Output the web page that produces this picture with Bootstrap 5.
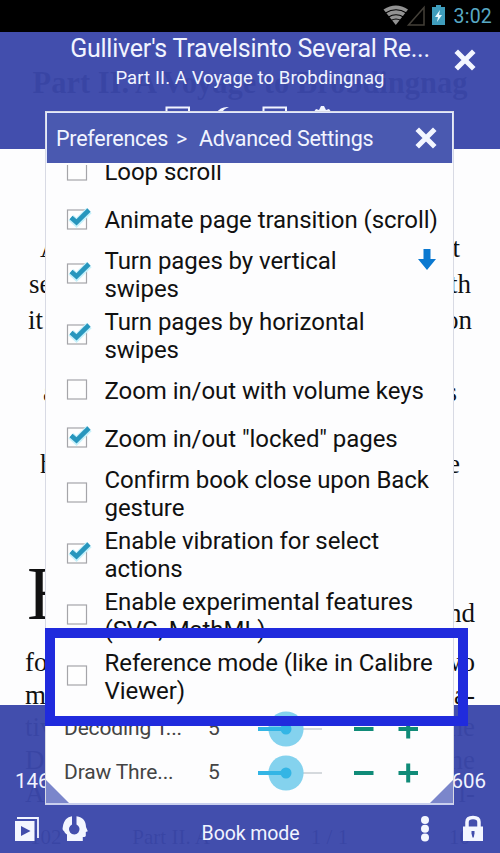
<!DOCTYPE html>
<html lang="en">
<head>
<meta charset="utf-8">
<meta name="viewport" content="width=device-width, initial-scale=1">
<title>Advanced Settings</title>
<link href="https://cdn.jsdelivr.net/npm/bootstrap@5.3.0/dist/css/bootstrap.min.css" rel="stylesheet">
<style>
body{font-family:Roboto,"Liberation Sans",sans-serif;background:#fff;color:#111}
.screen{width:500px;height:853px;background:#fdfdfe}
.layer{position:absolute;left:0;right:0}
.statusbar{height:32px;background:#000;z-index:2}
.clock{font-size:19.5px;letter-spacing:.2px;color:#58a9c4;line-height:33px}
.bar{background:rgba(59,72,170,.965);color:#f1f4ff}
.topbar{top:32px;height:117px}
.bottombar{bottom:0;height:148px}
.booktitle{font-size:25px;line-height:34px;letter-spacing:-.24px}
.chapter{font-size:18.5px;line-height:24px;letter-spacing:.09px}
.page{top:32px;bottom:0;font-family:"Liberation Serif",serif;color:#111;font-size:27px;padding:0 25px;overflow:hidden}
.page-title{font-size:30.5px;line-height:40px;padding-top:31px;height:198px}
.ln{line-height:36px;height:36px}
.ln-t{line-height:32.7px;height:32.7px}
.opening{height:151px;margin-bottom:13px}
.dropcap{font-size:76px;line-height:76px;height:78px;padding-left:2px}
.dialog-box{left:45px;width:409px;top:111px;height:694px;background:#fdfdfe;border:1px solid #d8dae4;border-bottom:2px solid #c9cfee;overflow:hidden}
.dialog-head{height:52px;background:#4a59b0;color:#f1f4ff;border:2px solid #e3e9ff;border-bottom:0;margin:-1px -1px 0;font-size:21.5px;letter-spacing:-.25px;padding:0 15px 0 9px;flex:none}
.crumbs{padding-top:2px}
.scroller{overflow:hidden;height:541.5px;flex:none;margin-top:2px}
.opts{margin-top:-18px}
.opt{height:61px;font-size:24px;line-height:28.2px;padding-left:20px;letter-spacing:-.07px}
.opt.single{height:48.4px}
.opt svg{width:26px;height:24px;flex:none;margin-right:12.5px;overflow:visible}
.opt span{white-space:nowrap;padding-top:2px}
.slide{height:44px;font-size:21px;letter-spacing:-.15px;color:#444;padding-left:18px}
.slide .lbl{width:144px}
.slide .val{width:49px}
.corner{bottom:0;z-index:1}
.highlight{left:45px;width:422.5px;top:628px;height:97.5px;border:10px solid #202bdd;z-index:5}
.arrow-down{right:16px;top:136px;position:absolute}
.mode{font-size:19.5px;letter-spacing:-.1px;padding:10px 8px 0 0}
.nums{font-size:20.5px;padding:0 14px 0 15px;top:64px;line-height:24px}
.tools{bottom:0;height:48px}
.ghost{top:792px;font-size:21px;padding:0 30px;line-height:26px}
.ghost .ch{margin-left:-30px}
.ic{display:block;flex:none}
</style>
<script src="https://cdn.jsdelivr.net/npm/bootstrap@5.3.0/dist/js/bootstrap.bundle.min.js"></script>
</head>
<body>
<svg width="0" height="0" class="position-absolute">
  <symbol id="off" viewBox="0 0 26 24"><rect x="1.500" y="2" width="19" height="19" fill="#fefefe" stroke="#a5a5a9" stroke-width="1.200"/></symbol>
  <symbol id="on" viewBox="0 0 26 24"><rect x="1.500" y="2" width="19" height="19" fill="#fefefe" stroke="#a5a5a9" stroke-width="1.200"/><path d="M5 9.800l5.500 5L23 2.500" fill="none" stroke="#c6f1fb" stroke-width="7.500"/><path d="M5 9.500l5.500 4.800L23 2" fill="none" stroke="#2796bd" stroke-width="4.600"/></symbol>
  <symbol id="x" viewBox="0 0 22 22"><path d="M4 4l14 14M18 4L4 18" stroke="#f3f6ff" stroke-width="5" stroke-linecap="square"/></symbol>
  <symbol id="seek" viewBox="0 0 66 36"><path d="M28 18h37" stroke="#c7ccd2" stroke-width="1.300"/><circle cx="29" cy="18" r="17.600" fill="#84d2ee"/><path d="M1 18h28" stroke="#33b5e5" stroke-width="4"/><circle cx="29" cy="18" r="5.500" fill="#33b5e5"/></symbol>
</svg>
<main class="screen position-relative overflow-hidden">
  <div class="layer statusbar top-0 d-flex align-items-center justify-content-end pe-2">
    <svg class="ic" width="64" height="32" viewBox="0 0 64 32">
      <path d="M1.500 9.500Q14 1.500 26 9.500L13.800 25Z" fill="#929292"/>
      <path d="M3.500 13q10.500-6.500 21 0M6.500 17q7.500-4.500 15 0M9 20.500q5-3 10 0" fill="none" stroke="#000" stroke-width="1.200"/>
      <path d="M26.500 25H42V7.500Z" fill="none" stroke="#444039" stroke-width="1.500"/>
      <path d="M50 7h4V5h5v2h4v18h-13z" fill="#3f9dbc"/><path d="M58 10l-5 7h3l-1 5 5-7h-3z" fill="#e9faff"/>
    </svg>
    <span class="clock ps-2">3:02</span>
  </div>
  <div class="layer page">
    <div class="page-title d-flex justify-content-center fw-bold text-nowrap">Part II. A Voyage to Brobdingnag</div>
    <div class="ln d-flex justify-content-between" style="padding:0 15px"><span>A</span><span>t</span></div>
    <div class="ln d-flex justify-content-between px-1"><span>se</span><span>th</span></div>
    <div class="ln d-flex justify-content-between" style="padding:0 3px"><span>it</span><span>on</span></div>
    <div class="ln"></div>
    <div class="ln d-flex justify-content-between" style="padding:0 18px"><span>a</span><span>s</span></div>
    <div class="ln"></div>
    <div class="ln d-flex justify-content-between" style="padding:0 15px"><span>h</span><span>e</span></div>
    <div class="opening d-flex justify-content-between align-items-end">
      <span class="dropcap">H</span><span>nd</span></div>
    <div>
      <div class="ln-t d-flex justify-content-between"><span>fo</span><span>wo</span></div>
      <div class="ln-t d-flex justify-content-between"><span>m</span><span>a-</span></div>
      <div class="ln-t d-flex justify-content-between"><span>tive</span><span>he</span></div>
      <div class="ln-t d-flex justify-content-between"><span>D</span><span>he</span></div>
      <div class="ln-t d-flex justify-content-between"><span>A</span><span>l-</span></div>
    </div>
    <div class="layer ghost d-flex justify-content-between"><span>102</span><span class="ch">Part II. A</span><span>1 / 1</span><span>10</span></div>
  </div>
  <header class="layer bar topbar">
    <div class="text-center text-nowrap booktitle">Gulliver's Travelsinto Several Re...</div>
    <div class="text-center text-nowrap chapter">Part II. A Voyage to Brobdingnag</div>
    <svg class="ic position-absolute end-0 top-0" style="margin:17px 24px 0 0" width="22" height="22"><use href="#x"/></svg>
    <svg class="ic ms-auto me-auto mt-3" width="170" height="12" viewBox="0 0 170 12"><path d="M1.500 12V1.500H24V12M98.500 12V1.500H121V12" fill="none" stroke="#f1f4ff" stroke-width="2"/><path d="M51 7Q56 0 64 1q-6 2-7 6zM148 7l3-4 3 1 2-4h3l2 4 3-1 3 4z" fill="#f1f4ff"/></svg>
  </header>
  <footer class="layer bar bottombar">
    <div class="layer nums d-flex justify-content-between"><span>146</span><span>606</span></div>
    <div class="layer tools d-flex align-items-center">
      <svg class="ic" style="margin-left:14px" width="26" height="28" viewBox="0 0 26 28"><path d="M1 6h19.500v20H1z" fill="#f3f6ff"/><path d="M3 3h21v20" fill="none" stroke="#f3f6ff" stroke-width="1.800"/><path d="M7 11v10l9.500-5z" fill="#414dac"/></svg>
      <svg class="ic" style="margin-left:21px" width="28" height="28" viewBox="0 0 28 28"><path d="M6 26v-6.500C4.500 18.500 3.500 17.500 3 16Q1 15 1.800 12C3 5 6 2 11 1.200V9.500a5.300 5.300 0 1 0 4.500 0V1.200C22 2 25 6 25 12l1.800 4.200-2 .8v3.500q0 1.500-3 1.500V26z" fill="#f3f6ff"/></svg>
      <span class="mode mx-auto">Book mode</span>
      <svg class="ic" width="10" height="28" viewBox="0 0 10 28"><g fill="#f3f6ff"><circle cx="5" cy="5" r="4"/><circle cx="5" cy="13.800" r="4"/><circle cx="5" cy="22.500" r="4"/></g></svg>
      <svg class="ic" style="margin:0 16px 0 32px" width="22" height="28" viewBox="0 0 22 28"><path d="M5 13V7q0-4.500 6-4.500t6 4.500v6" fill="none" stroke="#f3f6ff" stroke-width="3.500"/><path d="M1 11.500h20V26H1z" fill="#f3f6ff"/><path d="M9.500 16h3v2.500l-.8 4h-1.200l-1-4z" fill="#414dac"/></svg>
    </div>
  </footer>
  <section class="layer dialog-box d-flex flex-column">
    <div class="dialog-head d-flex align-items-center text-nowrap">
      <div class="crumbs"><span>Preferences</span><span class="px-2">&gt;</span><span class="ps-1">Advanced Settings</span></div>
      <svg class="ic ms-auto" width="22" height="22"><use href="#x"/></svg>
    </div>
    <div class="scroller"><div class="opts">
      <label class="opt single d-flex align-items-center"><svg><use href="#off"/></svg><span>Loop scroll</span></label>
      <label class="opt single d-flex align-items-center"><svg><use href="#on"/></svg><span>Animate page transition (scroll)</span></label>
      <label class="opt d-flex align-items-center"><svg><use href="#on"/></svg><span>Turn pages by vertical<br>swipes</span></label>
      <label class="opt d-flex align-items-center"><svg><use href="#on"/></svg><span>Turn pages by horizontal<br>swipes</span></label>
      <label class="opt single d-flex align-items-center"><svg><use href="#off"/></svg><span>Zoom in/out with volume keys</span></label>
      <label class="opt single d-flex align-items-center"><svg><use href="#on"/></svg><span>Zoom in/out "locked" pages</span></label>
      <label class="opt d-flex align-items-center"><svg><use href="#off"/></svg><span>Confirm book close upon Back<br>gesture</span></label>
      <label class="opt d-flex align-items-center"><svg><use href="#on"/></svg><span>Enable vibration for select<br>actions</span></label>
      <label class="opt d-flex align-items-center"><svg><use href="#off"/></svg><span>Enable experimental features<br>(SVG, MathML)</span></label>
      <label class="opt d-flex align-items-center"><svg><use href="#off"/></svg><span>Reference mode (like in Calibre<br>Viewer)</span></label>
    </div></div>
    <div class="slide d-flex align-items-center flex-shrink-0"><span class="lbl">Decoding T...</span><span class="val">5</span><svg class="ic" width="66" height="36"><use href="#seek"/></svg>
      <svg class="ic" style="margin-left:30px" width="66" height="20" viewBox="0 0 66 20"><path d="M1 10h19.500M45.500 10H65M55.200 .5v19" stroke="#108b78" stroke-width="4"/></svg></div>
    <div class="slide d-flex align-items-center flex-shrink-0"><span class="lbl">Draw Thre...</span><span class="val">5</span><svg class="ic" width="66" height="36"><use href="#seek"/></svg>
      <svg class="ic" style="margin-left:30px" width="66" height="20" viewBox="0 0 66 20"><path d="M1 10h19.500M45.500 10H65M55.200 .5v19" stroke="#108b78" stroke-width="4"/></svg></div>
    <svg class="arrow-down" width="20" height="23" viewBox="0 0 20 23"><path d="M6.500 1h7v10H19l-9 11L1 11h5.500z" fill="#0b79d0"/></svg>
    <div class="layer corner d-flex justify-content-between">
      <svg class="ic" width="23" height="23"><path d="M0 0v23h23z" fill="#7b86cb"/></svg>
      <svg class="ic" width="23" height="23"><path d="M23 0v23H0z" fill="#7b86cb"/></svg>
    </div>
  </section>
  <div class="layer highlight"></div>
</main>
</body>
</html>
